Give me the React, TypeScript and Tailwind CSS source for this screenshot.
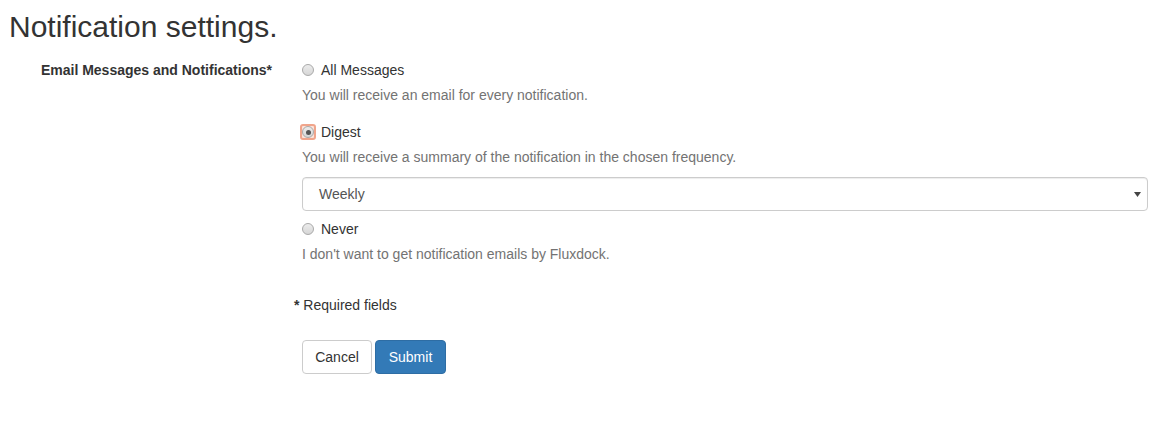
import React from 'react';

const font = { fontFamily: '"Liberation Sans", Arial, sans-serif' };

const Radio: React.FC<{ checked?: boolean; focused?: boolean }> = ({ checked, focused }) => (
  <span
    className={`inline-flex items-center justify-center w-[16px] h-[16px] rounded-[3px] ${
      focused ? 'border-2 border-[#f0a58c] bg-[#fbe3da]' : 'border-2 border-transparent'
    }`}
  >
    <span className="flex items-center justify-center w-[12px] h-[12px] rounded-full border border-[#a9a9a9] bg-gradient-to-b from-[#ececec] to-[#d6d6d6]">
      {checked && <span className="w-[5px] h-[5px] rounded-full bg-[#555]" />}
    </span>
  </span>
);

const RadioOption: React.FC<{ label: string; help: string; checked?: boolean; focused?: boolean; children?: React.ReactNode }> = ({
  label,
  help,
  checked,
  focused,
  children,
}) => (
  <div>
    <label className="flex items-center h-[20px] gap-[5px] -ml-[2px] text-[14px] text-[#333]">
      <Radio checked={checked} focused={focused} />
      <span>{label}</span>
    </label>
    <p className="mt-[5px] mb-[10px] text-[14px] leading-[20px] text-[#737373]">{help}</p>
    {children}
  </div>
);

export default function App() {
  return (
    <div className="bg-white min-h-[438px] w-[1169px] text-[#333]" style={font}>
      {/* Heading */}
      <h2 className="pt-[10px] pl-[9px] text-[30px] leading-[33px] font-normal text-[#333]">Notification settings.</h2>

      {/* Email row */}
      <div className="flex mt-[17px]">
        <div className="w-[287px] pr-[15px] text-right text-[14px] leading-[20px] font-bold">
          Email Messages and Notifications*
        </div>
        <div className="flex-1 pl-[15px] pr-[21px] flex flex-col gap-[7px]">
          <RadioOption label="All Messages" help="You will receive an email for every notification." />
          <RadioOption
            label="Digest"
            help="You will receive a summary of the notification in the chosen frequency."
            checked
            focused
          >
            <div className="flex items-center justify-between h-[34px] rounded-[4px] border border-[#ccc] pl-[16px] pr-[6px] text-[14px] text-[#555] shadow-[inset_0_1px_1px_rgba(0,0,0,0.075)]">
              <span>Weekly</span>
              <svg width="7" height="5" viewBox="0 0 7 5">
                <path d="M0 0h7L3.5 5z" fill="#444" />
              </svg>
            </div>
          </RadioOption>
          <div className="mt-[1px]">
            <RadioOption label="Never" help="I don't want to get notification emails by Fluxdock." />
          </div>
        </div>
      </div>

      {/* Required */}
      <p className="ml-[294px] mt-[21px] text-[14px] leading-[20px]">
        <b>*</b> Required fields
      </p>

      {/* Actions */}
      <div className="ml-[302px] mt-[25px] flex gap-[3px]">
        <button className="h-[34px] w-[70px] rounded-[4px] border border-[#ccc] bg-white text-[14px] text-[#333]">
          Cancel
        </button>
        <button className="h-[34px] w-[71px] rounded-[4px] border border-[#2e6da4] bg-[#337ab7] text-[14px] text-white">
          Submit
        </button>
      </div>
    </div>
  );
}
